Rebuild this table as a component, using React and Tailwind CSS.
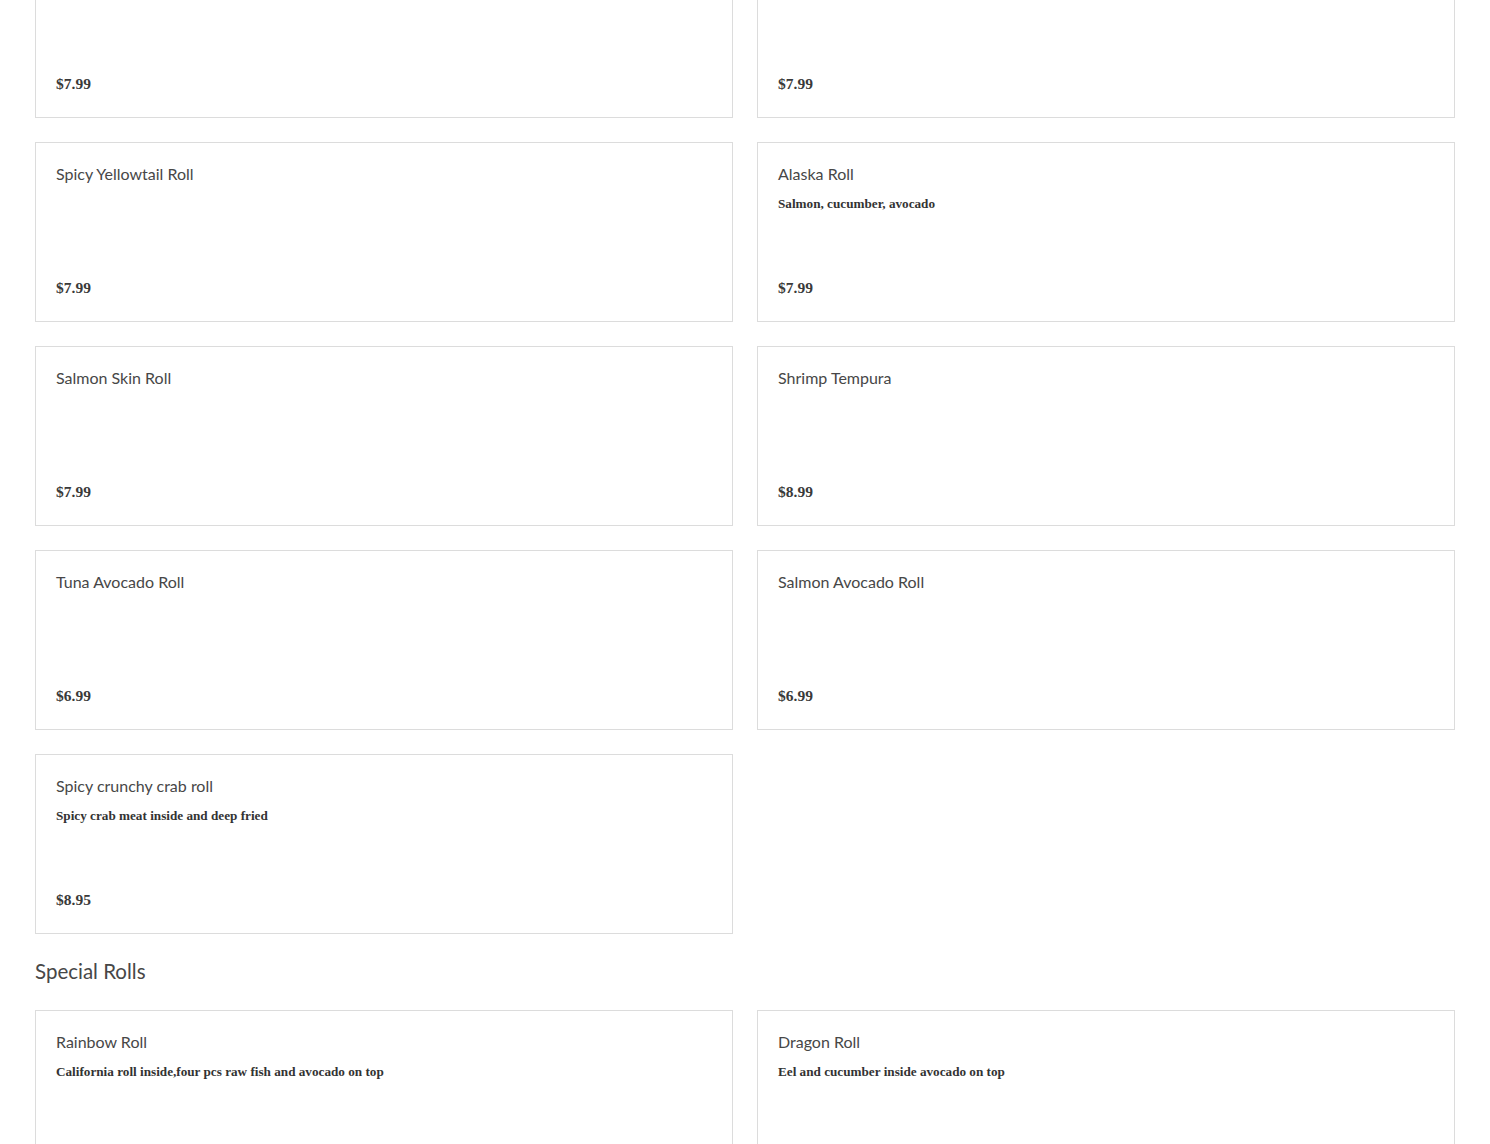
import React from "react";

const rows = [
  [
    { t: "", d: "", p: "$7.99" },
    { t: "", d: "", p: "$7.99" },
  ],
  [
    { t: "Spicy Yellowtail Roll", d: "", p: "$7.99" },
    { t: "Alaska Roll", d: "Salmon, cucumber, avocado", p: "$7.99" },
  ],
  [
    { t: "Salmon Skin Roll", d: "", p: "$7.99" },
    { t: "Shrimp Tempura", d: "", p: "$8.99" },
  ],
  [
    { t: "Tuna Avocado Roll", d: "", p: "$6.99" },
    { t: "Salmon Avocado Roll", d: "", p: "$6.99" },
  ],
  [{ t: "Spicy crunchy crab roll", d: "Spicy crab meat inside and deep fried", p: "$8.95" }],
];

const special = [
  { t: "Rainbow Roll", d: "California roll inside,four pcs raw fish and avocado on top", p: "" },
  { t: "Dragon Roll", d: "Eel and cucumber inside avocado on top", p: "" },
];

function Card({ item }) {
  return (
    <div className="h-[180px] border border-[#dcdcdc] bg-white flex flex-col px-5 pt-[19px] pb-[22px]">
      <div className="h-6 text-[16px] leading-6 text-[#474747] font-normal" style={{ fontFamily: "Lato, 'Noto Sans', sans-serif" }}>
        {item.t}
      </div>
      {item.d && (
        <div className="mt-[9px] text-[13.2px] leading-[18px] font-bold text-[#333]" style={{ fontFamily: "'Liberation Serif', serif" }}>
          {item.d}
        </div>
      )}
      {item.p && (
        <div className="mt-auto text-[15.5px] leading-[22px] font-semibold text-[#3a3a3a]" style={{ fontFamily: "'Liberation Serif', serif" }}>
          {item.p}
        </div>
      )}
    </div>
  );
}

export default function App() {
  return (
    <div className="bg-white min-h-[1144px] overflow-hidden">
      <div className="px-[35px] -mt-[62px]">
        <div className="grid grid-cols-2 gap-6">
          {rows.flat().map((it, i) => (
            <Card key={i} item={it} />
          ))}
        </div>
        <h2 className="mt-[23px] mb-[25px] text-[20.5px] leading-7 font-normal text-[#474747]" style={{ fontFamily: "Lato, 'Noto Sans', sans-serif" }}>
          Special Rolls
        </h2>
        <div className="grid grid-cols-2 gap-6">
          {special.map((it, i) => (
            <Card key={i} item={it} />
          ))}
        </div>
      </div>
    </div>
  );
}
